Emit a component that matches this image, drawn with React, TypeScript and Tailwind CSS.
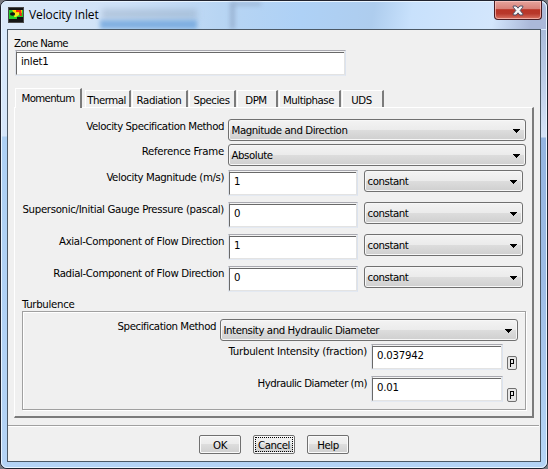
import React from "react";

function TextBox({ value, className }: { value: string; className: string }) {
  return (
    <div className={`h-[26px] shrink-0 border border-t-[#a9a9b0] border-l-[#dfe3ea] border-r-[#dbe3ef] border-b-[#e3e9f2] ${className}`}>
      <div className="h-full border border-t-[#f4f4f4] border-l-[#696969] border-r-[#e3e3e3] border-b-[#e3e3e3] bg-white">
        <div className="h-full border-t border-[#696969] pl-[4px] text-[11.3px] leading-[18px] tracking-[-0.2px]">{value}</div>
      </div>
    </div>
  );
}

function Select({ value, className }: { value: string; className: string }) {
  return (
    <div
      className={`flex h-[22px] shrink-0 items-center justify-between rounded-[3px] border border-[#707070] bg-[linear-gradient(#f3f3f3_0%,#ebebeb_50%,#dddddd_50%,#cfcfcf_100%)] pr-[4px] pl-[2.5px] shadow-[inset_0_0_0_1px_#f7f7f7] ${className}`}
    >
      <span className="mt-[1px]">{value}</span>
      <svg width="8" height="4" viewBox="0 0 8 4" className="mt-[2px]" shapeRendering="crispEdges">
        <path d="M0 0h7v1H6v1H5v1H4v1H3V3H2V2H1V1H0z" fill="#000" />
      </svg>
    </div>
  );
}

function Label({ text, className = "" }: { text: string; className?: string }) {
  return <span className={`mr-[4px] shrink-0 text-right leading-[14px] ${className}`}>{text}</span>;
}

const rows = [
  { label: "Velocity Magnitude (m/s)", value: "1", track: "tracking-[-0.4px]" },
  { label: "Supersonic/Initial Gauge Pressure (pascal)", value: "0", track: "tracking-[-0.33px]" },
  { label: "Axial-Component of Flow Direction", value: "1", track: "tracking-[-0.36px]" },
  { label: "Radial-Component of Flow Direction", value: "0", track: "tracking-[-0.37px]" },
];

const tabs = [
  { name: "Thermal", cls: "ml-[3px] w-[46px] pr-[2px] tracking-[-0.5px]" },
  { name: "Radiation", cls: "ml-[1px] w-[56px] pr-[1px] tracking-[-0.38px]" },
  { name: "Species", cls: "ml-[1px] w-[47px] pr-[1px] tracking-[-0.45px]" },
  { name: "DPM", cls: "ml-[1px] w-[41px] pr-[2px] tracking-[-0.5px]" },
  { name: "Multiphase", cls: "ml-[1px] w-[62px] pr-[2px] tracking-[-0.48px]" },
  { name: "UDS", cls: "ml-[1px] w-[42px] pr-[2px] tracking-[-0.5px]" },
];

function Param() {
  return (
    <div className="mt-[12px] ml-[4px] flex h-[14px] w-[10px] items-center justify-center rounded-[2px] border border-[#707070] bg-[#e6e6e6]">
      <svg width="4" height="8" viewBox="0 0 4 8" shapeRendering="crispEdges">
        <path d="M.5 8V.5h3v4h-3" fill="none" stroke="#000" />
      </svg>
    </div>
  );
}

function PushButton({ text, focused = false }: { text: string; focused?: boolean }) {
  return (
    <div className="h-[19px] w-[42px] rounded-[2px] border border-[#707070] bg-[linear-gradient(#f3f3f3_0%,#ebebeb_50%,#dddddd_50%,#cfcfcf_100%)] p-[1px] shadow-[inset_0_0_0_1px_#fafafa]">
      <div className={`flex h-full items-center justify-center border border-dotted pt-[2px] ${focused ? "border-black" : "border-transparent"}`}>
        {text}
      </div>
    </div>
  );
}

function AppIcon() {
  return (
    <svg width="16" height="16" viewBox="0 0 16 16">
      <rect width="16" height="16" fill="#4a4a4a" />
      <rect x="1" y="1" width="14" height="14" fill="#151515" />
      <rect x="1" y="3" width="14" height="9" fill="#24cf2a" />
      <path d="M4 3h10v3H6z" fill="#ffd400" />
      <path d="M8 3h5l1 6h-2l-1-4H8z" fill="#f02a12" />
      <path d="M7 6h4v2L8 10H6z" fill="#f5e820" />
      <ellipse cx="4.5" cy="7" rx="2.6" ry="1.8" fill="#111" />
      <path d="M9 10h6v2H9z" fill="#111" />
    </svg>
  );
}

export default function App() {
  return (
    <div className="h-[469px] w-[548px] overflow-hidden bg-[#77787f] font-['DejaVu_Sans_Condensed','DejaVu_Sans',sans-serif] text-[11.35px] tracking-[-0.43px] whitespace-nowrap text-black [font-stretch:condensed]">
      <div className="h-[469px] w-[548px] rounded-[7px] border border-[#20232f] bg-[linear-gradient(#c9e0f8_0px,#d9e9fb_30px,#d5e6fa_135px,#add0f4_136px,#b4d3f5_100%)]">
        <div className="relative flex h-[467px] flex-col rounded-[6px] border border-[#e8f4ff] px-[5px]">
          {/* glass tint on the right edge of the frame */}
          <div className="absolute top-[28px] right-0 h-[430px] w-[5px] bg-[linear-gradient(#a9bbda_0px,#d5e3f7_107px,#94b5e1_108px,#9dbce5_250px,#b5d5f6_100%)]" />
          <div className="absolute inset-x-0 top-0 h-[27px] rounded-t-[6px] bg-[linear-gradient(100deg,#dbe8f8_0%,#cfe2f8_22%,#b8d5f3_40%,#aed1f6_55%,#aecdee_68%,#c8e1fc_75%,#d3e6fc_90%,#abb9d9_97%)]" />
          <div className="absolute top-[7px] left-[100px] h-[10px] w-[95px] bg-[#94a9c3]/50 blur-[3px]" />
          <div className="absolute top-[18px] left-[98px] h-[9px] w-[97px] bg-[#6fa5dc]/80 blur-[2px]" />
          <div className="absolute top-0 left-[228px] h-[27px] w-[5px] bg-[#8198b8]/50 blur-[2px]" />
          <div className="absolute top-0 left-[231px] h-[4px] w-[28px] bg-[#8497b3]/40 blur-[2px]" />
          <div className="relative flex h-[27px] shrink-0 justify-between pl-[1px]">
            <div className="flex h-[25px] items-center gap-[5px]">
              <AppIcon />
              <span className="font-['Open_Sans','Noto_Sans',sans-serif] text-[12px] tracking-[-0.1px] [font-stretch:normal]">Velocity Inlet</span>
            </div>
            <div className="-mt-[1px] -mr-[1px] flex h-[19px] w-[48px] items-center justify-center rounded-b-[4px] border border-t-0 border-[#4a1c22] bg-[linear-gradient(#e5a49d_0%,#d88178_44%,#b93426_48%,#b8382b_70%,#d97363_100%)] shadow-[inset_0_0_0_1px_rgba(255,205,200,0.65)]">
              <svg width="12" height="11" viewBox="0 0 12 11">
                <path d="M1.2 1h3L6 3.2 7.8 1h3v1.2L8.2 5.5l2.6 3.2V10h-3L6 7.8 4.2 10h-3V8.700L3.800 5.500 1.200 2.200z" fill="#f6f6f6" stroke="#4d4f65" />
              </svg>
            </div>
          </div>

          <div className="relative flex h-[433px] w-[534px] shrink-0 flex-col border border-[#4c5966] bg-[#f0f0f0]">
            <div className="mt-[4px] ml-[6px] h-[16px] leading-[19px] tracking-[-0.6px]">Zone Name</div>
            <TextBox value="inlet1" className="ml-[7px] w-[331px]" />

            <div className="mt-[12px] ml-[7px] flex h-[19px] items-end">
              <div className="relative z-10 -mb-[1px] flex h-[20px] w-[67px] items-center justify-center border-t border-r-2 border-l border-t-white border-r-[#7b7b7b] border-l-white bg-[#f0f0f0] tracking-[-0.65px]">
                Momentum
              </div>
              {tabs.map((t) => (
                <div key={t.name} className={`flex h-[17px] items-center justify-center border-t border-r-2 border-l border-t-white border-r-[#7b7b7b] border-l-white pt-[2px] ${t.cls}`}>
                  {t.name}
                </div>
              ))}
            </div>

            <div className="ml-[6px] h-[311px] w-[520px] shrink-0 border-t border-r-2 border-b-2 border-l border-t-white border-r-[#7b7b7b] border-b-[#7b7b7b] border-l-white">
              <div className="mt-[11px] flex h-[25px] justify-end pr-[6px]">
                <Label text="Velocity Specification Method" />
                <Select value="Magnitude and Direction" className="w-[298px]" />
              </div>
              <div className="flex h-[26px] justify-end pr-[6px]">
                <Label text="Reference Frame" className="tracking-[-0.26px]" />
                <Select value="Absolute" className="w-[298px]" />
              </div>
              {rows.map((r) => (
                <div key={r.label} className="flex h-[32px] justify-end pr-[9px]">
                  <Label text={r.label} className={r.track} />
                  <TextBox value={r.value} className="mr-[6px] w-[130px]" />
                  <Select value="constant" className="w-[159px]" />
                </div>
              ))}
              <div className="mt-[-2px] ml-[7px] h-[15px] leading-[16px] tracking-[-0.32px]">Turbulence</div>
              <div className="ml-[7px] h-[99px] w-[504px] border border-[#a0a0a0] pt-[7px] shadow-[inset_1px_1px_0_#fff,1px_1px_0_#fff]">
                <div className="flex h-[25px] justify-end pr-[7px]">
                  <Label text="Specification Method" />
                  <Select value="Intensity and Hydraulic Diameter" className="w-[298px]" />
                </div>
                <div className="flex h-[32px] justify-end pr-[8px]">
                  <Label text="Turbulent Intensity (fraction)" className="tracking-[-0.24px]" />
                  <TextBox value="0.037942" className="w-[132px]" />
                  <Param />
                </div>
                <div className="flex h-[32px] justify-end pr-[8px]">
                  <Label text="Hydraulic Diameter (m)" className="tracking-[-0.5px]" />
                  <TextBox value="0.01" className="w-[132px]" />
                  <Param />
                </div>
              </div>
            </div>

            <div className="mt-[7px] h-[2px] w-[531px] border-t border-b border-t-[#a0a0a0] border-b-white" />
            <div className="mt-[8px] ml-[191px] flex gap-[12px]">
              <PushButton text="OK" />
              <PushButton text="Cancel" focused />
              <PushButton text="Help" />
            </div>
          </div>
        </div>
      </div>
    </div>
  );
}
